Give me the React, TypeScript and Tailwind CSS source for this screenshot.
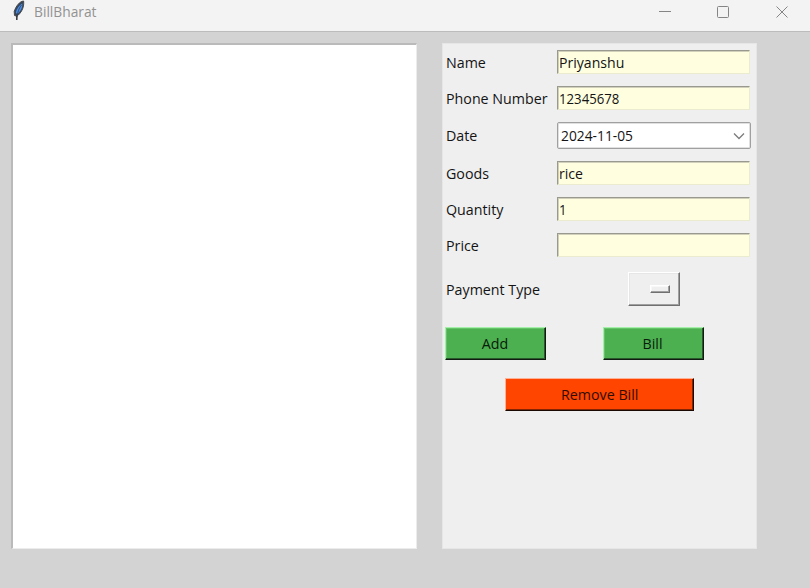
import type { ReactNode } from "react";

function Label({ children }: { children: ReactNode }) {
  return (
    <span className="w-[114px] shrink-0 pl-[3px]">
      <span className="-mt-px block origin-left scale-x-[0.95] whitespace-nowrap">{children}</span>
    </span>
  );
}

function Entry({ label, value, narrow = false }: { label: string; value: string; narrow?: boolean }) {
  return (
    <div className="mb-3 flex h-6 items-center">
      <Label>{label}</Label>
      <div className="flex h-6 w-[193px] items-center border border-t-[#999990] border-l-[#999990] border-r-[#ebebd0] border-b-[#ebebd0] bg-[#ffffe0] pl-px shadow-[inset_1px_1px_0_#d0d0bb]">
        <span
          className={
            narrow
              ? "-mt-px inline-block origin-left scale-x-[0.88] whitespace-nowrap"
              : "-mt-px inline-block origin-left scale-x-[0.94] whitespace-nowrap"
          }
        >
          {value}
        </span>
      </div>
    </div>
  );
}

function GreenButton({ children }: { children: ReactNode }) {
  return (
    <button className="flex h-[33px] w-[101px] items-center justify-center border border-t-[#a5f0a8] border-l-[#a5f0a8] border-r-[#101a10] border-b-[#101a10] bg-[#4caf50] text-[#0a1c0b] shadow-[inset_-1px_-1px_0_#2a5a2c,inset_1px_1px_0_#65c269]">
      <span className="-mt-[2px] mr-px inline-block scale-x-[0.95]">{children}</span>
    </button>
  );
}

export default function App() {
  return (
    <div className="flex h-[588px] w-[810px] flex-col overflow-hidden bg-[#d3d3d3] font-['Open_Sans','Noto_Sans',sans-serif] text-[15px] leading-5 text-[#141414]">
      <header className="flex h-8 shrink-0 items-start border-b border-[#bcbcbc] bg-[#f3f3f3]">
        <svg className="ml-[11px] h-[22px] w-4" viewBox="0 0 16 22" fill="none">
          <path d="M12.6 1C8.5 1.5 5 6 3.2 11.5L3.5 15.5L6 16.2C9.5 13.5 13.5 8 12.6 1Z" fill="#33465e" stroke="#4a4a4a" strokeWidth="1" />
          <path d="M11.2 3.5C8 5.5 5.4 9 4.8 13L6.5 14C9.8 11 11.9 7 11.2 3.5Z" fill="#4f8fe6" />
          <path d="M10.5 5C8.2 8 6.2 12 5.7 20" stroke="#2b3c55" strokeWidth="0.8" />
          <path d="M5.8 16V20" stroke="#2a2a2a" strokeWidth="1.2" />
        </svg>
        <span className="mt-[2px] ml-[7px] inline-block origin-left scale-x-[0.95] text-[14.5px] text-[#929292]">BillBharat</span>
        <svg className="ml-auto h-6 w-[152px]" viewBox="0 0 152 24" fill="none" stroke="#858585" strokeWidth="1">
          <path d="M1 11.5H13" />
          <rect x="59.5" y="6.5" width="11" height="11" rx="1" />
          <path d="M118.5 6.5L129.5 17.5M129.5 6.5L118.5 17.5" />
        </svg>
      </header>
      <main className="flex pt-[11px] pl-[11px]">
        <section className="h-[506px] w-[406px] border border-t-2 border-t-[#bababa] border-l-2 border-l-[#bababa] border-r-[#ececec] border-b-[#ececec] bg-white" />
        <section className="ml-[25px] h-[506px] w-[315px] border border-[#e6e6e6] bg-[#efefef] pt-[6px]">
          <Entry label="Name" value="Priyanshu" />
          <Entry label="Phone Number" value="12345678" narrow />
          <div className="mb-3 flex h-[27px] items-center">
            <Label>Date</Label>
            <div className="flex h-[27px] w-[194px] items-center justify-between rounded-[2px] border border-[#a0a0a0] bg-white pr-[5px] pl-[3px] shadow-[inset_0_0_0_1px_#e0e0e0]">
              <span className="-mt-px inline-block origin-left scale-x-[0.92]">2024-11-05</span>
              <svg className="h-3 w-3" viewBox="0 0 12 12" fill="none" stroke="#7c7c7c" strokeWidth="1.3">
                <path d="M1 3.5L6 8.5L11 3.5" />
              </svg>
            </div>
          </div>
          <Entry label="Goods" value="rice" />
          <Entry label="Quantity" value="1" narrow />
          <Entry label="Price" value="" />
          <div className="mt-[15px] flex h-[34px] items-center">
            <Label>Payment Type</Label>
            <button className="ml-[71px] flex h-[34px] w-[52px] items-center border border-t-white border-l-white border-r-[#707070] border-b-[#707070] bg-[#efefef] pl-[21px] shadow-[inset_-1px_-1px_0_#a0a0a0,inset_1px_1px_0_#e6e6e6]">
              <span className="h-2 w-[20px] border border-t-white border-l-white border-r-[#707070] border-b-[#707070] shadow-[inset_-1px_-1px_0_#a0a0a0,inset_1px_1px_0_#f8f8f8]" />
            </button>
          </div>
          <div className="mt-[21px] flex gap-[57px] pl-[2px]">
            <GreenButton>Add</GreenButton>
            <GreenButton>Bill</GreenButton>
          </div>
          <button className="mt-[18px] ml-[62px] flex h-[33px] w-[189px] items-center justify-center border border-t-[#ffb196] border-l-[#ffb196] border-r-[#1a0802] border-b-[#1a0802] bg-[#ff4500] text-[#300d00] shadow-[inset_-1px_-1px_0_#852400]">
            <span className="-mt-[2px] inline-block scale-x-[0.95]">Remove Bill</span>
          </button>
        </section>
      </main>
    </div>
  );
}
